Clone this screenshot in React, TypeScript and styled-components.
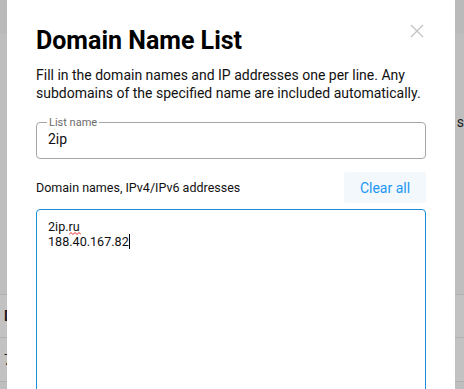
import styled, { createGlobalStyle } from 'styled-components';

const GlobalStyle = createGlobalStyle`
  html, body {
    margin: 0;
    padding: 0;
  }
  body {
    font-family: Roboto, "Liberation Sans", sans-serif;
    background: #bebebe;
  }
`;

const Screen = styled.div`
  position: relative;
  width: 464px;
  height: 389px;
  overflow: hidden;
  background: #bebebe;
`;

const Backdrop = styled.div`
  display: flex;
  flex-direction: column;
  height: 100%;
`;

const TopBar = styled.div`
  height: 34px;
  background: #bababa;
`;

const Section = styled.div<{ $height: number; $tone?: string; $top?: number }>`
  height: ${(p) => p.$height}px;
  background: ${(p) => p.$tone || '#bebebe'};
  border-bottom: 1px solid #b0b0b0;
  box-sizing: border-box;
  display: flex;
  align-items: ${(p) => (p.$top !== undefined ? 'flex-start' : 'center')};
  justify-content: space-between;
  padding: ${(p) => p.$top || 0}px 0 0 4px;
  font-size: 14px;
  color: #1a1a1a;
  white-space: nowrap;
`;

const BgText = styled.span<{ $bold?: boolean; $overflow?: number }>`
  font-weight: ${(p) => (p.$bold ? 700 : 400)};
  margin-right: ${(p) => -(p.$overflow || 0)}px;
`;

const Modal = styled.div`
  position: absolute;
  left: 7px;
  top: 0;
  width: 448px;
  height: 420px;
  background: #fff;
  box-sizing: border-box;
  padding: 26px 29px 0 29px;
`;

const Header = styled.div`
  display: flex;
  justify-content: space-between;
  align-items: flex-start;
`;

const Title = styled.h1`
  margin: 0;
  font-size: 25px;
  line-height: 30px;
  font-weight: 700;
  color: #000;
`;

const Close = styled.button`
  border: none;
  background: none;
  padding: 0;
  margin: -2px 2px 0 0;
  width: 14px;
  height: 14px;
  display: flex;
  align-items: center;
  justify-content: center;
  cursor: pointer;
`;

const Description = styled.p`
  margin: 10px 0 0 0;
  font-size: 14px;
  line-height: 18px;
  color: #111;
`;

const Field = styled.fieldset`
  margin: 15px 0 0 0;
  padding: 0 11px 0 11px;
  height: 42px;
  box-sizing: border-box;
  border: 1px solid #a6a6a6;
  border-radius: 4px;
`;

const Legend = styled.legend`
  padding: 0 2px;
  margin-left: -1px;
  font-size: 11px;
  line-height: 11px;
  color: #6b6b6b;
`;

const TextInput = styled.input`
  border: none;
  outline: none;
  padding: 0;
  margin-top: 2px;
  width: 100%;
  font-family: Roboto, "Liberation Sans", sans-serif;
  font-size: 14px;
  line-height: 18px;
  color: #111;
  background: transparent;
`;

const ListHeader = styled.div`
  display: flex;
  justify-content: space-between;
  align-items: center;
  margin-top: 13px;
`;

const ListLabel = styled.span`
  font-size: 12.5px;
  color: #111;
`;

const ClearButton = styled.button`
  border: none;
  border-radius: 3px;
  background: #f3f8fc;
  color: #2196f3;
  font-family: Roboto, "Liberation Sans", sans-serif;
  font-size: 14px;
  width: 82px;
  height: 31px;
  padding: 0;
  cursor: pointer;
`;

const Editor = styled.div`
  margin-top: 6px;
  height: 200px;
  border: 1px solid #1a90d2;
  border-radius: 4px;
  padding: 10px 11px;
  font-size: 12.6px;
  line-height: 14px;
  color: #111;
`;

const Line = styled.div`
  white-space: pre;
`;

const Misspelled = styled.span`
  position: relative;
  display: inline-block;
`;

const Squiggle = styled.svg`
  position: absolute;
  left: 0;
  bottom: -1px;
`;

const Caret = styled.span`
  display: inline-block;
  width: 1px;
  height: 15px;
  background: #000;
  vertical-align: -3px;
`;

export default function App() {
  return (
    <>
      <GlobalStyle />
      <Screen>
        <Backdrop>
          <TopBar />
          <Section $height={261} $top={80}>
            <span />
            <BgText $overflow={8}>s t</BgText>
          </Section>
          <Section $height={43} $tone="#c2c2c2">
            <BgText $bold>D</BgText>
          </Section>
          <Section $height={44} $tone="#c2c2c2">
            <BgText>7</BgText>
          </Section>
        </Backdrop>
        <Modal>
          <Header>
            <Title>Domain Name List</Title>
            <Close aria-label="Close">
              <svg width="14" height="14" viewBox="0 0 14 14">
                <path d="M1 1L13 13M13 1L1 13" stroke="#c4c4c4" strokeWidth="1.4" />
              </svg>
            </Close>
          </Header>
          <Description>
            Fill in the domain names and IP addresses one per line. Any subdomains of the specified name are included automatically.
          </Description>
          <Field>
            <Legend>List name</Legend>
            <TextInput defaultValue="2ip" />
          </Field>
          <ListHeader>
            <ListLabel>Domain names, IPv4/IPv6 addresses</ListLabel>
            <ClearButton>Clear all</ClearButton>
          </ListHeader>
          <Editor>
            <Line>
              2ip.
              <Misspelled>
                ru
                <Squiggle width="12" height="3" viewBox="0 0 12 3">
                  <path d="M0 2.5L2 0.5L4 2.5L6 0.5L8 2.5L10 0.5L12 2.5" stroke="#e02020" strokeWidth="1" fill="none" />
                </Squiggle>
              </Misspelled>
            </Line>
            <Line>
              188.40.167.82<Caret />
            </Line>
          </Editor>
        </Modal>
      </Screen>
    </>
  );
}
